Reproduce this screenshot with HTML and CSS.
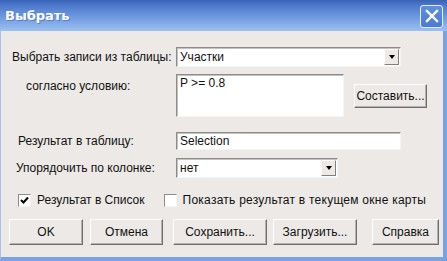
FILE: index.html
```html
<!DOCTYPE html>
<html lang="ru">
<head>
    <meta charset="UTF-8">
    <title>Выбрать</title>
    <link rel="stylesheet" href="styles.css">
</head>
<body>
    <div class="window">
        <div class="titlebar">
            <span class="title">Выбрать</span>
            <div class="close">
                <svg width="14" height="14" viewBox="0 0 14 14">
                    <path d="M2 2 L12 12 M12 2 L2 12" stroke="#fff" stroke-width="2.4" stroke-linecap="square"/>
                </svg>
            </div>
        </div>

        <div class="content">
            <div class="row row-table">
                <label class="label label-table">Выбрать записи из таблицы:</label>
                <div class="combo combo-table">
                    <span class="value">Участки</span>
                    <span class="arrow"><i></i></span>
                </div>
            </div>

            <div class="row row-cond">
                <label class="label label-cond">согласно условию:</label>
                <div class="textarea">P &gt;= 0.8</div>
                <button class="btn btn-compose">Составить...</button>
            </div>

            <div class="row row-result">
                <label class="label label-result">Результат в таблицу:</label>
                <div class="field">Selection</div>
            </div>

            <div class="row row-order">
                <label class="label label-order">Упорядочить по колонке:</label>
                <div class="combo combo-order">
                    <span class="value">нет</span>
                    <span class="arrow"><i></i></span>
                </div>
            </div>

            <div class="row row-checks">
                <div class="check">
                    <span class="box">
                        <svg width="9" height="9" viewBox="0 0 9 9"><path d="M1 4 L3.5 6.5 L8 1.5" stroke="#000" stroke-width="2" fill="none"/></svg>
                    </span>
                    Результат в Список
                </div>
                <div class="check check-map">
                    <span class="box"></span>
                    Показать результат в текущем окне карты
                </div>
            </div>

            <div class="row buttons">
                <button class="btn btn-ok">OK</button>
                <button class="btn btn-cancel">Отмена</button>
                <button class="btn btn-save">Сохранить...</button>
                <button class="btn btn-load">Загрузить...</button>
                <button class="btn btn-help">Справка</button>
            </div>
        </div>
    </div>
</body>
</html>
```

FILE: styles.css
```css
body {
    margin: 0;
    font-family: "Liberation Sans", Arial, sans-serif;
    font-size: 12px;
    color: #111;
    background: #ece9e6;
}

.window {
    width: 447px;
    height: 261px;
    box-sizing: border-box;
    display: flex;
    flex-direction: column;
    background: #ece9e6;
    border-right: 4px solid #7aa2e2;
    border-bottom: 4px solid #7aa2e2;
    border-left: 1px solid #a9c2ea;
}

.titlebar {
    height: 31px;
    margin-right: -4px;
    margin-left: -1px;
    display: flex;
    align-items: center;
    justify-content: space-between;
    padding: 0 4px 0 5px;
    background: linear-gradient(to bottom, #3a63b8 0%, #4f7bcd 20%, #6e9ae0 55%, #9cc1f0 100%);
}

.title {
    color: #fff;
    font-weight: bold;
    font-size: 13px;
    font-family: "DejaVu Sans", sans-serif;
    text-shadow: 1px 1px 0 #5a7ec4;
}

.close {
    width: 21px;
    height: 21px;
    border: 1px solid #e8eef8;
    border-radius: 3px;
    display: flex;
    align-items: center;
    justify-content: center;
    background: linear-gradient(to bottom, #5f8ede, #4a7bd3);
    margin-top: 1px;
}

.content {
    flex: 1;
    display: flex;
    flex-direction: column;
    padding-top: 16px;
}

.row {
    display: flex;
    align-items: center;
}

.label {
    width: 175px;
    box-sizing: border-box;
    white-space: nowrap;
}

.label-table { padding-left: 11px; }
.label-result { padding-left: 17px; }
.label-order { padding-left: 15px; }

.label-cond {
    align-self: flex-start;
    padding-top: 5px;
    padding-left: 25px;
}

/* sunken fields */
.combo,
.field,
.textarea {
    background: #fff;
    box-sizing: border-box;
    border-top: 1px solid #8c8c8c;
    border-left: 1px solid #8c8c8c;
    border-bottom: 1px solid #f4f4f4;
    border-right: 1px solid #f4f4f4;
    box-shadow: inset 1px 1px 0 #c4c2be;
}

.combo {
    height: 20px;
    display: flex;
    align-items: center;
    justify-content: space-between;
    padding-left: 3px;
}

.combo-table {
    width: 225px;
}

.combo-order {
    width: 162px;
}

.arrow {
    width: 15px;
    height: 16px;
    margin-right: 1px;
    background: #ece9e6;
    box-sizing: border-box;
    border-top: 1px solid #fff;
    border-left: 1px solid #fff;
    border-right: 1px solid #808080;
    border-bottom: 1px solid #808080;
    display: flex;
    align-items: center;
    justify-content: center;
}

.arrow i {
    width: 0;
    height: 0;
    border-left: 3.5px solid transparent;
    border-right: 3.5px solid transparent;
    border-top: 4px solid #000;
}

.row-table {
    height: 20px;
}

.row-cond {
    margin-top: 7px;
    height: 43px;
}

.textarea {
    width: 168px;
    height: 43px;
    padding: 1px 3px;
}

.row-result {
    margin-top: 15px;
    height: 18px;
}

.field {
    width: 225px;
    height: 18px;
    padding: 1px 3px;
}

.row-order {
    margin-top: 8px;
    height: 20px;
}

.row-checks {
    margin-top: 14px;
    height: 16px;
}

.check {
    display: flex;
    align-items: center;
    padding-left: 17px;
}

.check-map {
    padding-left: 19px;
    letter-spacing: 0.25px;
}

.box {
    width: 13px;
    height: 13px;
    box-sizing: border-box;
    background: #fff;
    border-top: 1px solid #8c8c8c;
    border-left: 1px solid #8c8c8c;
    border-bottom: 1px solid #f4f4f4;
    border-right: 1px solid #f4f4f4;
    margin-right: 6px;
    display: flex;
    align-items: center;
    justify-content: center;
}

/* raised buttons */
.btn {
    height: 26px;
    box-sizing: border-box;
    padding: 0;
    font-family: "Liberation Sans", Arial, sans-serif;
    font-size: 12px;
    color: #111;
    background: #ece9e6;
    border-top: 1px solid #fff;
    border-left: 1px solid #fff;
    border-right: 1px solid #6e6e6e;
    border-bottom: 1px solid #6e6e6e;
    box-shadow: inset -1px -1px 0 #b5b3b0;
}

.btn-compose {
    width: 73px;
    height: 24px;
    margin-left: 10px;
}

.buttons {
    margin-top: 11px;
    padding-left: 8px;
}

.btn-ok { width: 74px; }
.btn-cancel { width: 73px; margin-left: 7px; }
.btn-save { width: 94px; margin-left: 10px; }
.btn-load { width: 84px; margin-left: 6px; }
.btn-help { width: 67px; margin-left: 15px; }
```
